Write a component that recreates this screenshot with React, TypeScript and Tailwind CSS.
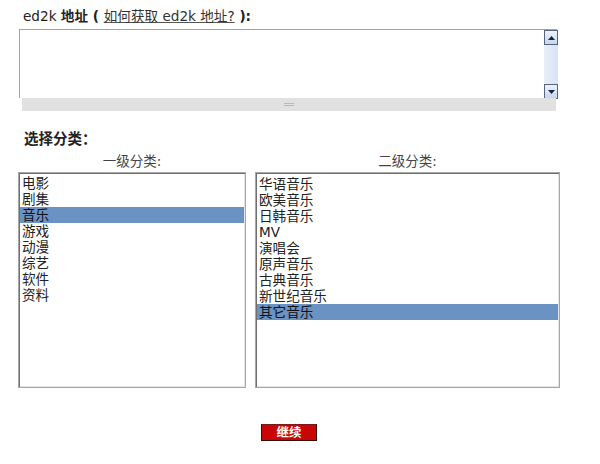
import React from "react";

const firstLevel = ["电影", "剧集", "音乐", "游戏", "动漫", "综艺", "软件", "资料"];
const secondLevel = ["华语音乐", "欧美音乐", "日韩音乐", "MV", "演唱会", "原声音乐", "古典音乐", "新世纪音乐", "其它音乐"];

const font = { fontFamily: '"DejaVu Sans", "Noto Sans CJK SC", sans-serif' };

function ScrollButton({ dir }: { dir: "up" | "down" }) {
  return (
    <div className="w-[14px] h-[15px] border border-[#56657d] bg-gradient-to-b from-[#eef3fc] to-[#c6d5ef] flex items-center justify-center">
      <svg width="7" height="4" viewBox="0 0 7 4">
        {dir === "up" ? <polygon points="0,4 7,4 3.5,0" fill="#1a2233" /> : <polygon points="0,0 7,0 3.5,4" fill="#1a2233" />}
      </svg>
    </div>
  );
}

function ListBox({ items, selected, width, padTop, padLeft }: { items: string[]; selected: number; width: string; padTop: string; padLeft: string }) {
  return (
    <div className={`${width} h-[216px] border border-[#a7a7a7] bg-white shadow-[inset_1px_1px_0_#6f6f6f,inset_-1px_-1px_0_#e4e4e4] px-[1px] ${padTop}`}>
      {items.map((it, i) => (
        <div
          key={it}
          className={`h-[16px] leading-[16px] ${padLeft} text-[13.6px] ${i === selected ? "bg-[#6a92c3] text-[#111]" : "text-[#222]"}`}
        >
          {it}
        </div>
      ))}
    </div>
  );
}

export default function App() {
  return (
    <div className="w-[600px] h-[464px] bg-white flex flex-col" style={font}>
      <div className="pt-[8px] pl-[23px] h-[24px] leading-[16px] text-[13.6px] text-[#222]">
        <span>ed2k </span>
        <b>地址 ( </b>
        <a className="underline text-[#333] decoration-[#555]">如何获取 ed2k 地址?</a>
        <b> ):</b>
      </div>

      <div className="mt-[5px] ml-[19px] w-[538px] h-[69px] border-t border-l border-[#a3a3a3] bg-white flex justify-end">
        <div className="w-[14px] h-[69px] flex flex-col justify-between bg-gradient-to-r from-[#e9eff9] to-[#d7e2f4] mr-[-1px]">
          <ScrollButton dir="up" />
          <ScrollButton dir="down" />
        </div>
      </div>
      <div className="ml-[22px] w-[534px] h-[13px] bg-[#e1e1e1] flex items-center justify-center">
        <div className="flex flex-col gap-[1px]">
          <div className="w-[10px] h-px bg-[#b9b9b9]" />
          <div className="w-[10px] h-px bg-[#b9b9b9]" />
        </div>
      </div>

      <div className="mt-[20px] pl-[24px] h-[16px] leading-[16px] text-[14.5px] font-bold text-[#222]">选择分类：</div>

      <div className="mt-[6px] pl-[18px] flex gap-[9px]">
        <div className="flex flex-col">
          <div className="h-[16px] leading-[16px] text-center text-[13.5px] text-[#444]">一级分类:</div>
          <div className="mt-[3px]">
            <ListBox items={firstLevel} selected={2} width="w-[228px]" padTop="pt-[2px]" padLeft="pl-[2px]" />
          </div>
        </div>
        <div className="flex flex-col">
          <div className="h-[16px] leading-[16px] text-center text-[13.5px] text-[#444]">二级分类:</div>
          <div className="mt-[3px]">
            <ListBox items={secondLevel} selected={8} width="w-[305px]" padTop="pt-[3px]" padLeft="pl-[2px]" />
          </div>
        </div>
      </div>

      <div className="mt-[36px] flex pl-[261px]">
        <button className="w-[56px] h-[17px] bg-[#c80606] border border-[#3a0a0a] border-t-[#7a1a1a] text-white text-[12.5px] font-bold leading-[15px] flex items-center justify-center">
          继续
        </button>
      </div>
    </div>
  );
}
